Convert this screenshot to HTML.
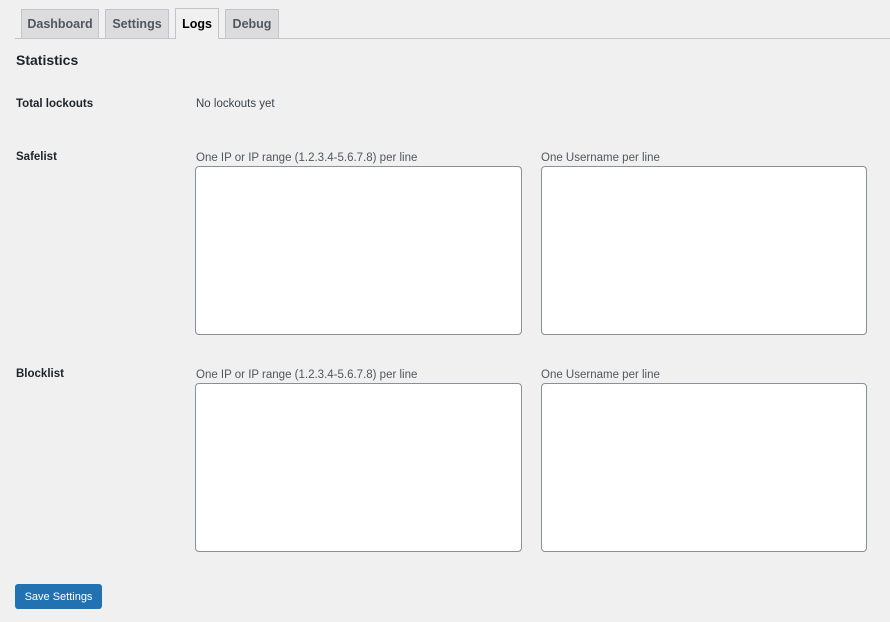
<!DOCTYPE html>
<html><head><style>
body{margin:0;width:890px;height:622px;background:#f0f0f1;font-family:"Liberation Sans",sans-serif;color:#1d2327;position:relative;overflow:hidden}
.a{position:absolute}
.tab{position:absolute;top:9px;background:#dcdcde;border:1px solid #c3c4c7;border-bottom:none;font-size:12.5px;font-weight:bold;color:#50575e;line-height:29px;text-align:center;box-sizing:border-box;height:29px}
.tab.act{background:#f0f0f1;color:#000;top:8px;height:31px;line-height:31px}
.lbl{position:absolute;font-size:11.5px;font-weight:bold}
.sm{position:absolute;font-size:11.5px;color:#50575e}
.ta{position:absolute;background:#fff;border:1px solid #8c8f94;border-radius:4px;box-sizing:border-box}
</style></head><body>
<div class="a" style="left:15px;right:0;top:38px;height:1px;background:#c3c4c7"></div>
<div class="tab" style="left:21px;width:78px">Dashboard</div>
<div class="tab" style="left:105px;width:64px">Settings</div>
<div class="tab act" style="left:175px;width:44px">Logs</div>
<div class="tab" style="left:225px;width:54px">Debug</div>
<div class="a" style="left:16px;top:52px;font-size:14px;font-weight:bold">Statistics</div>
<div class="lbl" style="left:16px;top:98px">Total lockouts</div>
<div class="a" style="left:196px;top:98px;font-size:11.5px;color:#3c434a">No lockouts yet</div>
<div class="lbl" style="left:16px;top:151px">Safelist</div>
<div class="sm" style="left:196px;top:152px">One IP or IP range (1.2.3.4-5.6.7.8) per line</div>
<div class="sm" style="left:541px;top:152px">One Username per line</div>
<div class="ta" style="left:195px;top:166px;width:327px;height:169px"></div>
<div class="ta" style="left:541px;top:166px;width:326px;height:169px"></div>
<div class="lbl" style="left:16px;top:368px">Blocklist</div>
<div class="sm" style="left:196px;top:369px">One IP or IP range (1.2.3.4-5.6.7.8) per line</div>
<div class="sm" style="left:541px;top:369px">One Username per line</div>
<div class="ta" style="left:195px;top:383px;width:327px;height:169px"></div>
<div class="ta" style="left:541px;top:383px;width:326px;height:169px"></div>
<div class="a" style="left:15px;top:584px;width:87px;height:25px;background:#2271b1;border-radius:3px;color:#fff;font-size:11px;line-height:26px;text-align:center">Save Settings</div>
</body></html>
